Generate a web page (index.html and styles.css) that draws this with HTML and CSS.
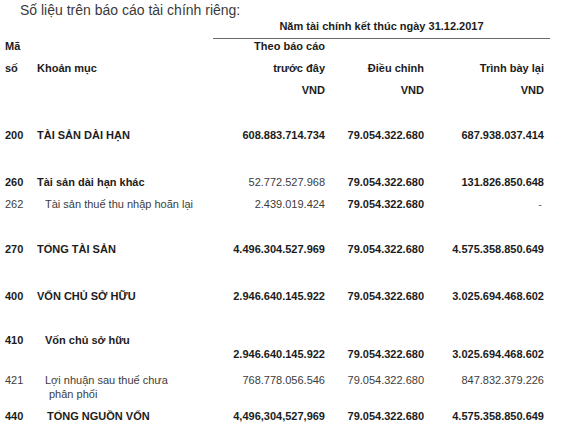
FILE: index.html
```html
<!DOCTYPE html>
<html lang="vi">
<head>
<meta charset="utf-8">
<link rel="stylesheet" href="styles.css">
</head>
<body>
<div class="page">
  <div class="title">Số liệu trên báo cáo tài chính riêng:</div>
  <div class="period">Năm tài chính kết thúc ngày 31.12.2017</div>
  <div class="table">
    <div class="row h22 b">
      <div>Mã</div><div></div><div class="num">Theo báo cáo</div><div></div><div></div>
    </div>
    <div class="row h22 b">
      <div>số</div><div>Khoản mục</div><div class="num">trước đây</div><div class="num">Điều chỉnh</div><div class="num">Trình bày lại</div>
    </div>
    <div class="row h45 b">
      <div></div><div></div><div class="num">VND</div><div class="num">VND</div><div class="num">VND</div>
    </div>
    <div class="row h47 b">
      <div>200</div><div>TÀI SẢN DÀI HẠN</div><div class="num">608.883.714.734</div><div class="num">79.054.322.680</div><div class="num">687.938.037.414</div>
    </div>
    <div class="row h22 b">
      <div>260</div><div>Tài sản dài hạn khác</div><div class="num r">52.772.527.968</div><div class="num">79.054.322.680</div><div class="num">131.826.850.648</div>
    </div>
    <div class="row h45 r">
      <div>262</div><div class="sub">Tài sản thuế thu nhập hoãn lại</div><div class="num">2.439.019.424</div><div class="num b">79.054.322.680</div><div class="num dash">-</div>
    </div>
    <div class="row h47 b">
      <div>270</div><div>TỔNG TÀI SẢN</div><div class="num">4.496.304.527.969</div><div class="num">79.054.322.680</div><div class="num">4.575.358.850.649</div>
    </div>
    <div class="row h44 b">
      <div>400</div><div>VỐN CHỦ SỞ HỮU</div><div class="num">2.946.640.145.922</div><div class="num">79.054.322.680</div><div class="num">3.025.694.468.602</div>
    </div>
    <div class="row h40 b">
      <div>410</div><div class="sub">Vốn chủ sở hữu</div><div class="num low">2.946.640.145.922</div><div class="num low">79.054.322.680</div><div class="num low">3.025.694.468.602</div>
    </div>
    <div class="row h36 r">
      <div>421</div><div class="sub">Lợi nhuận sau thuế chưa<br><span class="cont">phân phối</span></div><div class="num">768.778.056.546</div><div class="num">79.054.322.680</div><div class="num">847.832.379.226</div>
    </div>
    <div class="row h14 b">
      <div>440</div><div class="sub2">TỔNG NGUỒN VỐN</div><div class="num">4,496,304,527,969</div><div class="num">79.054.322.680</div><div class="num">4.575.358.850.649</div>
    </div>
  </div>
</div>
</body>
</html>
```

FILE: styles.css
```css
html, body {
  margin: 0;
  padding: 0;
  background: #ffffff;
}

.page {
  width: 584px;
  height: 428px;
  overflow: hidden;
  font-family: "Liberation Sans", Arial, sans-serif;
  color: #1c1c1c;
  padding-left: 5px;
  box-sizing: border-box;
}

.title {
  margin-left: 15px;
  padding-top: 1px;
  font-size: 14px;
  line-height: 18px;
  height: 18px;
  color: #3a3a3a;
}

.period {
  margin-left: 208px;
  width: 337px;
  box-sizing: border-box;
  text-align: center;
  font-size: 11px;
  font-weight: bold;
  line-height: 14px;
  height: 20px;
  border-bottom: 1px solid #6a6a6a;
}

.table {
  font-size: 11px;
  line-height: 14px;
}

.row {
  display: grid;
  grid-template-columns: 32px 188px 100px 99px 120px;
  align-items: start;
}

.h14 { height: 14px; }
.h22 { height: 22px; }
.h36 { height: 36px; }
.h40 { height: 40px; }
.h44 { height: 44px; }
.h45 { height: 45px; }
.h47 { height: 47px; }

.b { font-weight: bold; color: #1c1c1c; }
.r { font-weight: normal; color: #3c3c3c; }
.num.b { font-weight: bold; color: #1c1c1c; }
.num.r { font-weight: normal; color: #3c3c3c; }

.num {
  text-align: right;
  white-space: nowrap;
}

.sub { padding-left: 8px; }
.sub2 { padding-left: 10px; }
.cont { padding-left: 4px; }

.low { margin-top: 14px; }

.dash { padding-right: 2px; color: #666; }
```
